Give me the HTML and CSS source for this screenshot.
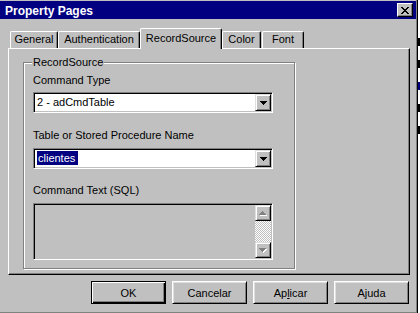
FILE: index.html
```html
<!DOCTYPE html>
<html>
<head>
    <title>Property Pages</title>
    <link rel="stylesheet" href="styles.css">
</head>
<body>
    <div class="window">
        <div class="titlebar">
            <span class="title">Property Pages</span>
            <button class="close-btn">
                <svg width="8" height="7" viewBox="0 0 8 7" shape-rendering="crispEdges">
                    <path d="M0 0h2v1h-2zM6 0h2v1h-2zM1 1h2v1h-2zM5 1h2v1h-2zM2 2h4v1h-4zM3 3h2v1h-2zM2 4h4v1h-4zM1 5h2v1h-2zM5 5h2v1h-2zM0 6h2v1h-2zM6 6h2v1h-2z" fill="#000"/>
                </svg>
            </button>
        </div>

        <div class="tabs">
            <div class="tab tab-general">General</div>
            <div class="tab tab-auth">Authentication</div>
            <div class="tab tab-record selected">RecordSource</div>
            <div class="tab tab-color">Color</div>
            <div class="tab tab-font">Font</div>
        </div>

        <div class="panel">
            <div class="group">
                <span class="group-title">RecordSource</span>

                <div class="field-label">Command Type</div>
                <div class="combo">
                    <span class="combo-text">2 - adCmdTable</span>
                    <span class="drop-btn">
                        <svg width="7" height="4" viewBox="0 0 7 4" shape-rendering="crispEdges">
                            <path d="M0 0h7v1h-7zM1 1h5v1h-5zM2 2h3v1h-3zM3 3h1v1h-1z" fill="#000"/>
                        </svg>
                    </span>
                </div>

                <div class="field-label second">Table or Stored Procedure Name</div>
                <div class="combo">
                    <span class="combo-text"><span class="highlight">clientes</span></span>
                    <span class="drop-btn">
                        <svg width="7" height="4" viewBox="0 0 7 4" shape-rendering="crispEdges">
                            <path d="M0 0h7v1h-7zM1 1h5v1h-5zM2 2h3v1h-3zM3 3h1v1h-1z" fill="#000"/>
                        </svg>
                    </span>
                </div>

                <div class="field-label third">Command Text (SQL)</div>
                <div class="textbox">
                    <div class="scrollbar">
                        <span class="scroll-btn">
                            <svg width="8" height="5" viewBox="0 0 8 5" shape-rendering="crispEdges">
                                <path d="M4 1h1v1h-1zM3 2h3v1h-3zM2 3h5v1h-5zM1 4h7v1h-7z" fill="#fff"/>
                                <path d="M3 0h1v1h-1zM2 1h3v1h-3zM1 2h5v1h-5zM0 3h7v1h-7z" fill="#808080"/>
                            </svg>
                        </span>
                        <span class="scroll-track"></span>
                        <span class="scroll-btn">
                            <svg width="8" height="5" viewBox="0 0 8 5" shape-rendering="crispEdges">
                                <path d="M1 1h7v1h-7zM2 2h5v1h-5zM3 3h3v1h-3zM4 4h1v1h-1z" fill="#fff"/>
                                <path d="M0 0h7v1h-7zM1 1h5v1h-5zM2 2h3v1h-3zM3 3h1v1h-1z" fill="#808080"/>
                            </svg>
                        </span>
                    </div>
                </div>
            </div>
        </div>

        <div class="buttons">
            <button class="btn default">OK</button>
            <button class="btn">Cancelar</button>
            <button class="btn">Ap<u>l</u>icar</button>
            <button class="btn">Ajuda</button>
        </div>
    </div>

    <div class="behind">
        <span class="mark"></span>
        <span class="mark"></span>
        <span class="mark blue"></span>
        <span class="mark"></span>
        <span class="mark"></span>
    </div>
</body>
</html>
```

FILE: styles.css
```css
/* Pagina geral */
body {
    margin: 0;
    height: 313px;
    overflow: hidden;
    display: flex;
    background-color: #c0c0c0;
    font-family: "Liberation Sans", Arial, sans-serif;
    font-size: 11px;
    color: #000;
}

/* Janela do dialogo */
.window {
    width: 417px;
    height: 313px;
    box-sizing: border-box;
    padding-top: 1px;
    border-right: 1px solid #808080;
    border-bottom: 1px solid #808080;
    display: flex;
    flex-direction: column;
}

.titlebar {
    height: 18px;
    background-color: #000080;
    display: flex;
    align-items: center;
    justify-content: space-between;
    padding: 0 3px 0 5px;
}

.title {
    color: #fff;
    font-weight: bold;
    font-size: 12px;
    padding-top: 1px;
}

.close-btn {
    width: 16px;
    height: 14px;
    padding: 0;
    margin: 0;
    box-sizing: border-box;
    background-color: #c0c0c0;
    border: 1px solid;
    border-color: #fff #000 #000 #fff;
    box-shadow: inset -1px -1px #808080;
    display: flex;
    align-items: center;
    justify-content: center;
}

/* Abas */
.tabs {
    display: flex;
    align-items: flex-start;
    margin: 9px 0 -1px 10px;
    height: 21px;
}

.tab {
    box-sizing: border-box;
    height: 17px;
    margin-top: 3px;
    line-height: 15px;
    text-align: center;
    border-top: 1px solid #fff;
    border-left: 1px solid #fff;
    border-right: 1px solid #000;
    border-radius: 2px 2px 0 0;
    box-shadow: inset -1px 0 #808080;
    background-color: #c0c0c0;
}

.tab-general { width: 48px; }
.tab-auth { width: 82px; }
.tab-record { width: 82px; }
.tab-color { width: 39px; }
.tab-font { width: 42px; margin-left: 1px; }

.tab.selected {
    height: 21px;
    margin-top: 0;
    line-height: 18px;
    position: relative;
    z-index: 1;
}

/* Painel da aba */
.panel {
    box-sizing: border-box;
    width: 402px;
    height: 227px;
    margin-left: 8px;
    border-top: 1px solid #fff;
    border-left: 1px solid #fff;
    border-right: 1px solid #000;
    border-bottom: 1px solid #000;
    box-shadow: inset -1px -1px #808080;
    padding: 13px 0 0 14px;
}

.group {
    position: relative;
    box-sizing: border-box;
    width: 272px;
    height: 207px;
    border: 1px solid #808080;
    box-shadow: inset 1px 1px #fff, 1px 1px #fff;
    padding: 10px 0 0 9px;
}

.group-title {
    position: absolute;
    top: -7px;
    left: 8px;
    padding: 0 1px;
    line-height: 13px;
    background-color: #c0c0c0;
}

.field-label {
    line-height: 14px;
    margin-bottom: 5px;
}

.field-label.second {
    margin-top: 15px;
    margin-bottom: 6px;
}

.field-label.third {
    margin-top: 14px;
    margin-bottom: 6px;
}

/* Caixa de combinacao */
.combo, .textbox {
    box-sizing: border-box;
    width: 240px;
    border: 1px solid;
    border-color: #808080 #fff #fff #808080;
    box-shadow: inset 1px 1px #000, inset -1px -1px #c0c0c0;
    padding: 1px;
    display: flex;
}

.combo {
    height: 21px;
    background-color: #fff;
}

.combo-text {
    flex: 1;
    line-height: 17px;
    padding-left: 2px;
}

.highlight {
    background-color: #000080;
    color: #fff;
    padding: 1px 3px 1px 1px;
}

.drop-btn, .scroll-btn {
    box-sizing: border-box;
    width: 16px;
    height: 17px;
    background-color: #c0c0c0;
    border: 1px solid;
    border-color: #dfdfdf #000 #000 #dfdfdf;
    box-shadow: inset 1px 1px #fff, inset -1px -1px #808080;
    display: flex;
    align-items: center;
    justify-content: center;
}

.drop-btn {
    margin-left: auto;
}

/* Texto do comando (desabilitado) */
.textbox {
    height: 57px;
    background-color: #c0c0c0;
    justify-content: flex-end;
}

.scrollbar {
    width: 16px;
    display: flex;
    flex-direction: column;
}

.scroll-btn {
    height: 16px;
}

.scroll-track {
    flex: 1;
    background: repeating-conic-gradient(#fff 0 25%, #c0c0c0 0 50%) 0 0 / 2px 2px;
}

/* Botoes de baixo */
.buttons {
    display: flex;
    justify-content: flex-end;
    gap: 6px;
    margin-top: 6px;
    padding-right: 7px;
}

.btn {
    box-sizing: border-box;
    width: 75px;
    height: 23px;
    padding: 0;
    font-family: "Liberation Sans", Arial, sans-serif;
    font-size: 11px;
    color: #000;
    background-color: #c0c0c0;
    border: 1px solid;
    border-color: #fff #000 #000 #fff;
    box-shadow: inset 1px 1px #dfdfdf, inset -1px -1px #808080;
}

.btn.default {
    border-color: #000;
    box-shadow: inset 1px 1px #fff, inset -1px -1px #000, inset -2px -2px #808080;
}

/* Outra janela atras */
.behind {
    flex: 1;
    border-left: 1px solid #000;
    background-color: #fff;
    display: flex;
    flex-direction: column;
    gap: 14px;
    padding-top: 38px;
}

.mark {
    height: 8px;
    background-color: #000;
}

.mark.blue {
    background-color: #000080;
}
```
